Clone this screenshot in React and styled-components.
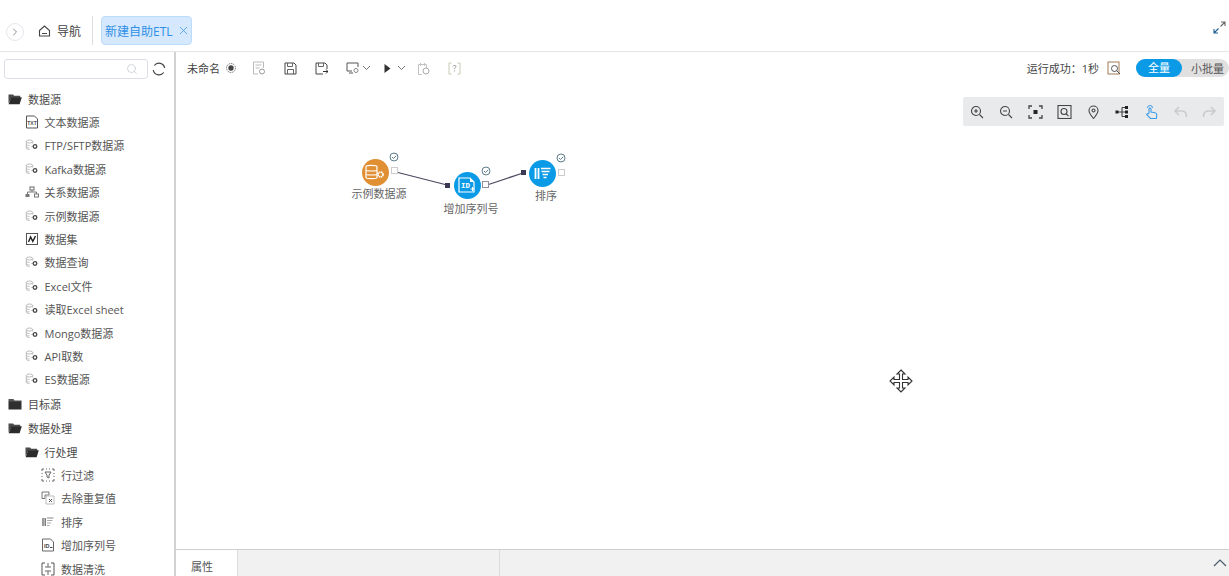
import React from "react";
import styled, { createGlobalStyle } from "styled-components";
import { ChevronRight, Search, X } from "lucide-react";

const GlobalStyle = createGlobalStyle`
  html, body {
    margin: 0;
    height: 100%;
    overflow: hidden;
    background: #fff;
  }
  body {
    font-family: "Open Sans", "Noto Sans CJK SC", sans-serif;
    font-size: 11px;
    color: #4a4a4a;
  }
  #root { height: 100%; }
`;

const Page = styled.div`
  width: 1229px;
  height: 576px;
  display: flex;
  flex-direction: column;
  overflow: hidden;
`;

const Header = styled.header`
  height: 52px;
  flex: none;
  box-sizing: border-box;
  border-bottom: 1px solid #e6e6e6;
  padding: 16px 3px 6px 6px;
  display: flex;
  align-items: flex-start;
  font-size: 12px;
`;

const Collapse = styled.span`
  width: 18px;
  height: 18px;
  margin-top: 7px;
  box-sizing: border-box;
  border: 1px solid #e4e7ed;
  border-radius: 50%;
  display: flex;
  align-items: center;
  justify-content: center;
  color: #666;
`;

const NavLink = styled.span`
  margin: 7px 11px 0 14px;
  height: 15px;
  display: flex;
  align-items: center;
  gap: 6px;
  color: #444;
`;

const Divider = styled.span`
  width: 1px;
  height: 29px;
  background: #ddd;
  margin-right: 8px;
`;

const Tab = styled.span`
  width: 91px;
  height: 29px;
  box-sizing: border-box;
  border: 1px solid #bcdcfb;
  border-radius: 4px;
  background: #d6e8fd;
  color: #2f90e6;
  display: flex;
  align-items: center;
  justify-content: space-between;
  padding: 0 1px 0 3px;
`;

const Expand = styled.span`
  margin-left: auto;
  margin-top: 5px;
  display: flex;
`;

const Body = styled.div`
  flex: 1;
  display: flex;
  min-height: 0;
`;

const Sidebar = styled.aside`
  width: 176px;
  flex: none;
  box-sizing: border-box;
  border-right: 2px solid #d2d2d2;
  padding: 7px 0 0 4px;
  overflow: hidden;
`;

const SearchRow = styled.div`
  display: flex;
  align-items: center;
  gap: 4px;
  margin-bottom: 8px;
`;

const SearchBox = styled.div`
  width: 144px;
  height: 20px;
  box-sizing: border-box;
  border: 1px solid #dcdfe6;
  border-radius: 3px;
  display: flex;
  align-items: center;
  justify-content: flex-end;
  padding-right: 9px;
  color: #c6c8cc;
`;

const Row = styled.div`
  height: 23.4px;
  display: flex;
  align-items: center;
  gap: 6px;
  margin-top: ${(p) => (p.$level === 0 ? 1 : 0)}px;
  padding-left: ${(p) => p.$level * 16.5 + 4}px;
  color: ${(p) => (p.$group ? "#4c4c4c" : "#555")};
  white-space: nowrap;
`;

const RowIcon = styled.span`
  width: 14px;
  height: 14px;
  flex: none;
  display: flex;
  align-items: center;
  justify-content: center;
`;

const Main = styled.main`
  flex: 1;
  min-width: 0;
  display: flex;
  flex-direction: column;
`;

const Toolbar = styled.div`
  height: 33px;
  flex: none;
  box-sizing: border-box;
  padding: 0 0 1px 11px;
  display: flex;
  align-items: center;
`;

const FileName = styled.span`
  color: #444;
  margin-right: 5px;
`;

const ToolIcon = styled.span`
  display: flex;
  align-items: center;
  gap: ${(p) => p.$gap || 0}px;
  margin-left: ${(p) => p.$left}px;
`;

const Status = styled.div`
  margin-left: auto;
  display: flex;
  align-items: center;
  color: #444;
`;

const ModeSwitch = styled.div`
  width: 93px;
  height: 18px;
  margin-left: 15px;
  border-radius: 9px;
  background: #e1e0e0;
  display: flex;
  align-items: center;
`;

const ModeActive = styled.span`
  width: 46px;
  height: 18px;
  border-radius: 9px;
  background: #0b9ae6;
  color: #fff;
  text-align: center;
  line-height: 17px;
  margin-right: 9px;
`;

const ModeOther = styled.span`
  color: #555;
`;

const Canvas = styled.div`
  flex: 1;
  position: relative;
  min-height: 0;
`;

const CanvasTools = styled.div`
  position: absolute;
  top: 12px;
  right: 5px;
  width: 261px;
  height: 29px;
  border-radius: 2px;
  background: #e9eaec;
  display: grid;
  grid-template-columns: repeat(9, 1fr);
  align-items: center;
  justify-items: center;
`;

const Wires = styled.svg`
  position: absolute;
  left: 0;
  top: 0;
`;

const NodeCircle = styled.span`
  position: absolute;
  left: ${(p) => p.$x - 13.5}px;
  top: ${(p) => p.$y - 13.5}px;
  width: 27px;
  height: 27px;
  border-radius: 50%;
  background: ${(p) => p.$color};
  display: flex;
  align-items: center;
  justify-content: center;
`;

const NodeLabel = styled.span`
  position: absolute;
  left: ${(p) => p.$x}px;
  top: ${(p) => p.$y - 8}px;
  height: 16px;
  line-height: 16px;
  transform: translateX(-50%);
  color: #666;
  white-space: nowrap;
`;

const Marker = styled.span`
  position: absolute;
  left: ${(p) => p.$x}px;
  top: ${(p) => p.$y}px;
  display: flex;
`;

const BottomBar = styled.div`
  height: 27px;
  flex: none;
  box-sizing: border-box;
  border-top: 1px solid #cfcfcf;
  background: #f1f1f1;
  display: flex;
  overflow: hidden;
`;

const BottomTab = styled.span`
  width: 62px;
  box-sizing: border-box;
  padding-left: 15px;
  background: #fff;
  color: #555;
  border-right: 1px solid #ddd;
  line-height: 33px;
`;

const BottomSpacer = styled.span`
  width: 262px;
  box-sizing: border-box;
  border-right: 1px solid #dcdce0;
`;

const BottomToggle = styled.span`
  margin-left: auto;
  margin-right: 2px;
  padding-top: 9px;
  display: flex;
`;

const Svg = ({ size = 14, w, h, children, ...rest }) => (
  <svg width={w || size} height={h || size} viewBox={`0 0 ${w || size} ${h || size}`} fill="none" {...rest}>
    {children}
  </svg>
);

const Caret = () => (
  <Svg w={9} h={6}>
    <path d="M1 1l3.500 3.500L8 1" stroke="#777" />
  </Svg>
);

const FolderOpen = () => (
  <Svg w={14} h={12}>
    <path d="M0.5 1.500h4.500l1.200 1.300h6v2H3.400L.5 10.500z" fill="#4a4a4a" />
    <path d="M3.200 4.200h10.600l-2.200 7H.6z" fill="#2b2b2b" />
  </Svg>
);

const FolderClosed = () => (
  <Svg w={14} h={12}>
    <path d="M.5 1h5l1 1.400h7V4H.5z" fill="#555" />
    <rect x=".5" y="3.600" width="13" height="7.900" fill="#2f2f2f" />
  </Svg>
);

const TextFile = () => (
  <Svg>
    <path d="M1.500 1h8l3 3v9h-11z" stroke="#555" />
    <text x="2.300" y="9.600" fontSize="5" fontWeight="700" fill="#555" fontFamily="Liberation Sans">TXT</text>
  </Svg>
);

const DbLink = () => (
  <Svg w={14} h={12}>
    <ellipse cx="4.500" cy="2.500" rx="3.200" ry="1.500" stroke="#bbb" />
    <path d="M1.300 2.500v6.500c0 1 1.500 1.500 3.200 1.500M7.700 2.500v2M1.300 5c0 1 1.500 1.500 3.200 1.500M1.300 7.500c0 1 1.500 1.500 3.200 1.500" stroke="#bbb" />
    <circle cx="10" cy="7.500" r="1.800" stroke="#444" strokeWidth="1.300" />
    <path d="M6.500 7.500H8" stroke="#999" />
  </Svg>
);

const Relation = () => (
  <Svg w={14} h={12}>
    <rect x="5" y="1" width="4" height="3" stroke="#666" />
    <rect x=".5" y="8" width="4" height="3" fill="#777" />
    <rect x="9.500" y="8" width="4" height="3" stroke="#777" />
    <path d="M7 4v2M2.500 8V6h9v2" stroke="#777" />
  </Svg>
);

const DataSet = () => (
  <Svg>
    <rect x="1.500" y="1.500" width="11" height="11" stroke="#555" />
    <path d="M3.500 10 5.600 5l2.200 4.400L10.500 4" stroke="#222" strokeWidth="1.400" />
  </Svg>
);

const RowFilter = () => (
  <Svg>
    <path d="M1 3V1h2M11 1h2v2M13 11v2h-2M3 13H1v-2M5 1h1M8 1h1M1 5v1M1 8v1M13 5v1M13 8v1M5 13h1M8 13h1" stroke="#666" />
    <path d="M4 4h6L8 7.200V10L6 9V7.200z" stroke="#666" />
  </Svg>
);

const Dedupe = () => (
  <Svg>
    <path d="M1 1h7v3H4v3.500H1z" stroke="#777" />
    <path d="M5 5h8v8H5z" stroke="#bbb" />
    <path d="M8 8l3 3M11 8l-3 3" stroke="#555" />
  </Svg>
);

const SortLines = () => (
  <Svg w={12} h={10}>
    <path d="M1 1v8M3.200 1v8" stroke="#666" strokeWidth="1.300" />
    <path d="M5 1h6.500" stroke="#aaa" strokeWidth="1.400" />
    <path d="M5 3.500h5.500M5 6h4M5 8.500h2.500" stroke="#aaa" />
  </Svg>
);

const SeqFile = () => (
  <Svg>
    <path d="M1.500 1h8l3 3v9h-11z" stroke="#666" />
    <text x="3" y="9.600" fontSize="5.500" fontWeight="700" fill="#444" fontFamily="Liberation Sans">ID</text>
    <path d="M9 9.500h2.500" stroke="#444" />
  </Svg>
);

const Clean = () => (
  <Svg>
    <path d="M4 1H1v12h3M10 1h3v12h-3" stroke="#555" />
    <path d="M4 5h6M4 9h6M7 1v4M7 9v4" stroke="#666" />
  </Svg>
);

const Refresh = () => (
  <Svg>
    <path d="M12.700 6A5.800 5.800 0 0 0 2.300 3.500" stroke="#444" strokeWidth="1.200" />
    <path d="M1.300 8A5.800 5.800 0 0 0 11.700 10.500" stroke="#444" strokeWidth="1.200" />
  </Svg>
);

const Home = () => (
  <Svg w={13} h={12}>
    <path d="M1.500 5.500 6.500 1l5 4.500V11h-10z" stroke="#444" strokeWidth="1.100" />
    <path d="M4 8.500h5" stroke="#444" />
  </Svg>
);

const ExpandIcon = () => (
  <Svg w={13} h={13}>
    <path d="M7.500 5.500 12 1M8 1h4v4" stroke="#666" strokeWidth="1.100" />
    <path d="M5.500 7.500 1 12M5 12H1V8" stroke="#1d5f90" strokeWidth="1.100" />
  </Svg>
);

const tree = [
  { level: 0, icon: FolderOpen, label: "数据源", group: true },
  { level: 1, icon: TextFile, label: "文本数据源" },
  { level: 1, icon: DbLink, label: "FTP/SFTP数据源" },
  { level: 1, icon: DbLink, label: "Kafka数据源" },
  { level: 1, icon: Relation, label: "关系数据源" },
  { level: 1, icon: DbLink, label: "示例数据源" },
  { level: 1, icon: DataSet, label: "数据集" },
  { level: 1, icon: DbLink, label: "数据查询" },
  { level: 1, icon: DbLink, label: "Excel文件" },
  { level: 1, icon: DbLink, label: "读取Excel sheet" },
  { level: 1, icon: DbLink, label: "Mongo数据源" },
  { level: 1, icon: DbLink, label: "API取数" },
  { level: 1, icon: DbLink, label: "ES数据源" },
  { level: 0, icon: FolderClosed, label: "目标源", group: true },
  { level: 0, icon: FolderOpen, label: "数据处理", group: true },
  { level: 1, icon: FolderOpen, label: "行处理", group: true },
  { level: 2, icon: RowFilter, label: "行过滤" },
  { level: 2, icon: Dedupe, label: "去除重复值" },
  { level: 2, icon: SortLines, label: "排序" },
  { level: 2, icon: SeqFile, label: "增加序列号" },
  { level: 2, icon: Clean, label: "数据清洗" },
];

const Check = () => (
  <Svg w={10} h={10}>
    <circle cx="5" cy="5" r="4" stroke="#5d7d8c" />
    <path d="M3 5l1.500 1.500L7.200 3.800" stroke="#5d7d8c" />
  </Svg>
);

const OutPort = ({ dark }) => (
  <Svg w={7} h={7}>
    <rect x=".5" y=".5" width="6" height="6" fill="#fff" stroke={dark ? "#8f8f9f" : "#ccc"} />
  </Svg>
);

const InPort = () => (
  <Svg w={5} h={5}>
    <rect width="5" height="5" fill="#3a3a55" />
  </Svg>
);

const nodes = [
  {
    x: 199, y: 87, labelX: 203, labelY: 109, label: "示例数据源", color: "#e08f33",
    check: [213, 67], out: [215, 82],
    glyph: (
      <Svg w={20} h={16}>
        <path d="M1 2.500C1 1 12 1 12 2.500v11C12 15 1 15 1 13.500zM1 6c0 1.300 11 1.300 11 0M1 10c0 1.300 11 1.300 11 0" stroke="#fff" strokeWidth="1.200" />
        <circle cx="15.500" cy="10.500" r="2.500" stroke="#fff" strokeWidth="1.700" strokeDasharray="1.500 .5" />
      </Svg>
    ),
  },
  {
    x: 291, y: 100, labelX: 295, labelY: 124, label: "增加序列号", color: "#0b9ae6",
    check: [305, 81], out: [306, 96], dark: true,
    glyph: (
      <Svg w={18} h={16}>
        <path d="M1 1h11l4 4v10H1z" stroke="#fff" strokeWidth="1.200" />
        <path d="M12 1v4h4" fill="#fff" />
        <text x="3" y="11" fontSize="7.500" fontWeight="700" fill="#fff" fontFamily="Liberation Mono">ID</text>
        <path d="M12.500 12h4M14.500 10v4" stroke="#fff" />
      </Svg>
    ),
  },
  {
    x: 366, y: 88, labelX: 370, labelY: 111, label: "排序", color: "#0b9ae6",
    check: [380, 68], out: [382, 84],
    glyph: (
      <Svg w={17} h={13}>
        <path d="M1.500 1v11M4.500 1v11" stroke="#fff" strokeWidth="1.800" />
        <path d="M7 1.500h9.500M7.500 4.500h8M8.500 7.500h5.500M9.500 10.500h3" stroke="#fff" strokeWidth="1.500" />
      </Svg>
    ),
  },
];

const inPorts = [[269, 98], [345, 85]];

const ToolPng = ({ children }) => (
  <Svg w={15} h={14}>{children}</Svg>
);

const s = { stroke: "#444", strokeWidth: 1.100 };
const off = { stroke: "#cbcbcb", strokeWidth: 1.600 };

const canvasTools = [
  <ToolPng key="in"><circle cx="6" cy="6" r="4.500" {...s} /><path d="M9.500 9.500 13 13M4 6h4M6 4v4" {...s} /></ToolPng>,
  <ToolPng key="out"><circle cx="6" cy="6" r="4.500" {...s} /><path d="M9.500 9.500 13 13M4 6h4" {...s} /></ToolPng>,
  <ToolPng key="fit"><path d="M1 4V1h3M11 1h3v3M14 10v3h-3M4 13H1v-3" {...s} strokeWidth="1.300" /><rect x="5.500" y="5" width="4" height="4" fill="#222" /></ToolPng>,
  <ToolPng key="frame"><rect x="1" y=".5" width="13" height="13" {...s} /><circle cx="7" cy="6.500" r="3" {...s} /><path d="M9.200 8.800 11.500 11" {...s} /></ToolPng>,
  <ToolPng key="pin"><path d="M7.500 13.500C4.500 10 3 8 3 5.500a4.500 4.500 0 0 1 9 0c0 2.500-1.500 4.500-4.500 8z" {...s} /><circle cx="7.500" cy="5.500" r="1.500" {...s} /></ToolPng>,
  <ToolPng key="tree"><path d="M2 7h9M7 2.500v9M7 2.500h4M7 11.500h4" {...s} /><rect x=".5" y="5.500" width="3" height="3" fill="#222" /><rect x="10" y="1" width="3" height="3" fill="#222" /><rect x="10" y="5.500" width="3" height="3" fill="#222" /><rect x="10" y="10" width="3" height="3" fill="#222" /></ToolPng>,
  <ToolPng key="hand">
    <path d="M5 8V4a1 1 0 0 1 2 0v3l4 .8c1.500.4 2 1.200 1.800 2.700L12.300 13.500H6.500L3 10c-.6-.8.500-1.800 1.200-1.200z" stroke="#3d9be9" strokeWidth="1.100" />
    <path d="M3.500 3a2.500 2.500 0 0 1 5 0" stroke="#3d9be9" />
  </ToolPng>,
  <ToolPng key="undo"><path d="M6 2 2 6l4 4M2 6h7c3 0 4.500 2 4.500 6" {...off} /></ToolPng>,
  <ToolPng key="redo"><path d="M9 2l4 4-4 4M13 6H6C3 6 1.500 8 1.500 12" {...off} /></ToolPng>,
];

const App = () => (
  <Page>
    <GlobalStyle />
    <Header>
      <Collapse><ChevronRight size={12} strokeWidth={1.500} /></Collapse>
      <NavLink><Home />导航</NavLink>
      <Divider />
      <Tab>新建自助ETL<X size={13} strokeWidth={1.300} /></Tab>
      <Expand><ExpandIcon /></Expand>
    </Header>
    <Body>
      <Sidebar>
        <SearchRow>
          <SearchBox><Search size={12} strokeWidth={1.500} /></SearchBox>
          <Refresh />
        </SearchRow>
        {tree.map((item) => (
          <Row key={item.label} $level={item.level} $group={item.group}>
            <RowIcon><item.icon /></RowIcon>
            {item.label}
          </Row>
        ))}
      </Sidebar>
      <Main>
        <Toolbar>
          <FileName>未命名</FileName>
          <Svg w={12} h={12}>
            <circle cx="6" cy="6" r="4.500" stroke="#777" strokeDasharray="1.500 .8" />
            <circle cx="6" cy="6" r="2.700" fill="#444" />
          </Svg>
          <ToolIcon $left={15}>
            <Svg>
              <path d="M1.500 1h10v6M6 13H1.500V1M3.500 4h6M3.500 7h4" stroke="#bbb" />
              <circle cx="10" cy="10.500" r="2.500" stroke="#999" />
            </Svg>
          </ToolIcon>
          <ToolIcon $left={18}>
            <Svg w={13} h={13}>
              <path d="M1 1h9l2 2v9H1z" stroke="#444" />
              <path d="M3.500 1v3.500h5V1M3.500 12V7.500h6V12" stroke="#666" />
            </Svg>
          </ToolIcon>
          <ToolIcon $left={18}>
            <Svg w={13} h={13}>
              <path d="M1 1h9l2 2v4M1 1v11h7" stroke="#444" />
              <path d="M3.500 1v3.500h5V1" stroke="#666" />
              <path d="M8 9.500h5M11 7.500l2 2-2 2" stroke="#333" />
            </Svg>
          </ToolIcon>
          <ToolIcon $left={18} $gap={3}>
            <Svg w={13} h={12}>
              <path d="M6 9H1V1h11v4M3 11h4" stroke="#555" />
              <circle cx="10" cy="8.500" r="2" stroke="#888" />
            </Svg>
            <Caret />
          </ToolIcon>
          <ToolIcon $left={13} $gap={6}>
            <Svg w={7} h={9}><path d="M.5 0 6.500 4.500.5 9z" fill="#333" /></Svg>
            <Caret />
          </ToolIcon>
          <ToolIcon $left={11}>
            <Svg w={13} h={13}>
              <path d="M1.500 2.500h8V6M5 12.500H1.500v-10M3.500 1v3M7.500 1v3" stroke="#c2c2c2" />
              <circle cx="9" cy="9" r="3" stroke="#aaa" />
            </Svg>
          </ToolIcon>
          <ToolIcon $left={18}>
            <Svg w={13} h={13}>
              <path d="M3.500 1H1v11h2.500M9.500 1H12v11H9.500" stroke="#c9c9b6" />
              <path d="M5 4.500c.5-1.500 3-1.500 3 0 0 1-1.500 1-1.500 2.500M6.500 8.500v1" stroke="#999" />
            </Svg>
          </ToolIcon>
          <Status>
            运行成功：1秒
            <Svg style={{ marginLeft: 8 }}>
              <rect x="1" y="1" width="11" height="12" stroke="#a37b55" />
              <circle cx="7.500" cy="7.500" r="3" fill="#fff" stroke="#555" />
              <path d="M9.700 9.700 13 13" stroke="#555" />
            </Svg>
            <ModeSwitch>
              <ModeActive>全量</ModeActive>
              <ModeOther>小批量</ModeOther>
            </ModeSwitch>
          </Status>
        </Toolbar>
        <Canvas>
          <CanvasTools>{canvasTools}</CanvasTools>
          <Wires width="500" height="200">
            <path d="M220 87 271 100M311 100 347 88" stroke="#4a4a60" strokeWidth="1.200" />
          </Wires>
          {nodes.map((n) => (
            <React.Fragment key={n.label}>
              <NodeCircle $x={n.x} $y={n.y} $color={n.color}>{n.glyph}</NodeCircle>
              <NodeLabel $x={n.labelX} $y={n.labelY}>{n.label}</NodeLabel>
              <Marker $x={n.check[0]} $y={n.check[1]}><Check /></Marker>
              <Marker $x={n.out[0]} $y={n.out[1]}><OutPort dark={n.dark} /></Marker>
            </React.Fragment>
          ))}
          {inPorts.map(([x, y]) => (
            <Marker key={x} $x={x} $y={y}><InPort /></Marker>
          ))}
          <Marker $x={713} $y={284}>
            <Svg w={24} h={24}>
              <path d="M12 1l4 4h-2.500v5.500H19V8l4 4-4 4v-2.500h-5.500V19H16l-4 4-4-4h2.500v-5.500H5V16l-4-4 4-4v2.500h5.500V5H8z" fill="#fff" stroke="#333" strokeWidth="1.100" />
            </Svg>
          </Marker>
        </Canvas>
        <BottomBar>
          <BottomTab>属性</BottomTab>
          <BottomSpacer />
          <BottomToggle>
            <Svg w={14} h={8}>
              <path d="M1 7l6-6 6 6" stroke="#4a5a6a" strokeWidth="1.200" />
            </Svg>
          </BottomToggle>
        </BottomBar>
      </Main>
    </Body>
  </Page>
);

export default App;
